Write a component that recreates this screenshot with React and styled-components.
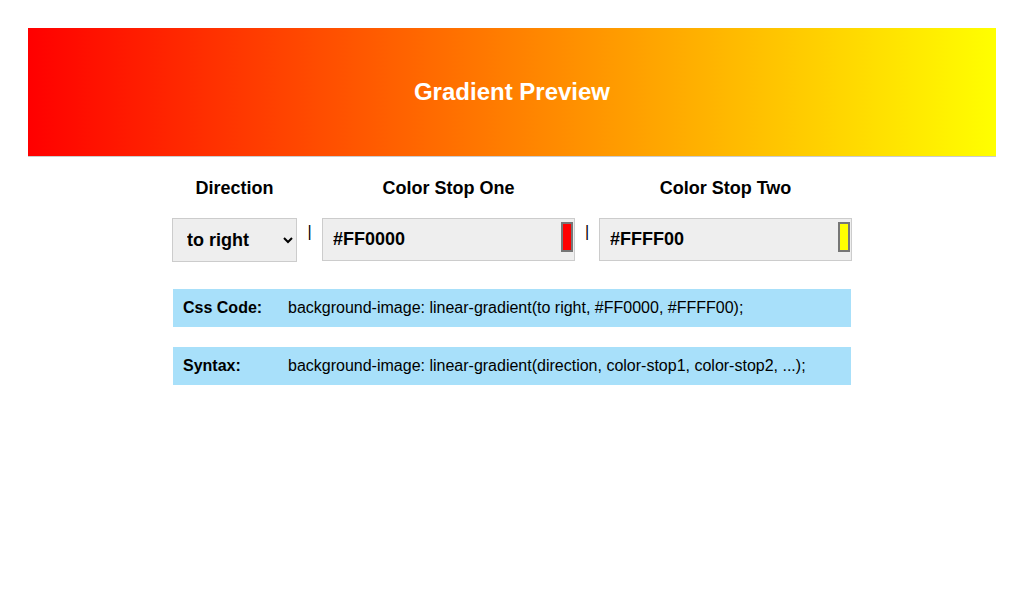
import React, { useState } from 'react';
import styled, { createGlobalStyle } from 'styled-components';

const GlobalStyle = createGlobalStyle`
    body {
        margin: 0;
        background: #ffffff;
        font-family: "Liberation Sans", Arial, sans-serif;
        color: #000000;
    }
`;

const App = () => {
    const [direction, setDirection] = useState('to right');
    const [stopOne, setStopOne] = useState('#FF0000');
    const [stopTwo, setStopTwo] = useState('#FFFF00');

    const gradient = `linear-gradient(${direction}, ${stopOne}, ${stopTwo})`;

    return (
        <>
            <GlobalStyle />
            <Page>
                <Preview style={{ backgroundImage: gradient }}>Gradient Preview</Preview>
                <Controls>
                    <Label>Direction</Label>
                    <span />
                    <Label>Color Stop One</Label>
                    <span />
                    <Label>Color Stop Two</Label>

                    <Select value={direction} onChange={(e) => setDirection(e.target.value)}>
                        <option value="to right">to right</option>
                        <option value="to left">to left</option>
                        <option value="to bottom">to bottom</option>
                        <option value="to top">to top</option>
                    </Select>
                    <Separator>|</Separator>
                    <ColorField>
                        <TextInput value={stopOne} onChange={(e) => setStopOne(e.target.value)} />
                        <Swatch $color={stopOne} />
                    </ColorField>
                    <Separator>|</Separator>
                    <ColorField>
                        <TextInput value={stopTwo} onChange={(e) => setStopTwo(e.target.value)} />
                        <Swatch $color={stopTwo} />
                    </ColorField>
                </Controls>

                <InfoRow>
                    <InfoLabel>Css Code:</InfoLabel>
                    <InfoValue>background-image: {gradient};</InfoValue>
                </InfoRow>
                <InfoRow>
                    <InfoLabel>Syntax:</InfoLabel>
                    <InfoValue>background-image: linear-gradient(direction, color-stop1, color-stop2, ...);</InfoValue>
                </InfoRow>
            </Page>
        </>
    );
};

const Page = styled.div`
    padding: 28px;
    display: flex;
    flex-direction: column;
    align-items: center;
`;

const Preview = styled.div`
    width: 100%;
    height: 128px;
    border-bottom: 1px solid #cccccc;
    display: flex;
    align-items: center;
    justify-content: center;
    color: #ffffff;
    font-size: 24px;
    font-weight: bold;
`;

const Controls = styled.div`
    display: grid;
    grid-template-columns: 125px 25px 253px 24px 253px;
    row-gap: 19px;
    margin-top: 20px;
    margin-bottom: 27px;
`;

const Label = styled.div`
    text-align: center;
    font-size: 18px;
    font-weight: bold;
    line-height: 22px;
`;

const Select = styled.select`
    height: 44px;
    padding: 0 8px 0 10px;
    background: #eeeeee;
    border: 1px solid #cccccc;
    border-radius: 0;
    font-family: "Liberation Sans", Arial, sans-serif;
    font-size: 18px;
    font-weight: bold;
    color: #000000;
`;

const Separator = styled.div`
    text-align: center;
    font-size: 16px;
    line-height: 16px;
    padding-top: 6px;
    color: #000000;
`;

const ColorField = styled.div`
    position: relative;
    height: 43px;
`;

const TextInput = styled.input`
    box-sizing: border-box;
    width: 100%;
    height: 100%;
    padding: 0 10px;
    background: #eeeeee;
    border: 1px solid #cccccc;
    outline: none;
    font-family: "Liberation Sans", Arial, sans-serif;
    font-size: 18px;
    font-weight: bold;
    color: #000000;
`;

const Swatch = styled.span`
    position: absolute;
    top: 4px;
    right: 2px;
    box-sizing: border-box;
    width: 12px;
    height: 30px;
    background: ${(p) => p.$color};
    border: 2px solid #767676;
`;

const InfoRow = styled.div`
    box-sizing: border-box;
    width: 678px;
    height: 38px;
    margin-bottom: 20px;
    padding: 0 10px;
    display: flex;
    align-items: center;
    background: #a8e0fa;
    font-size: 16px;
`;

const InfoLabel = styled.div`
    width: 105px;
    font-weight: bold;
`;

const InfoValue = styled.div``;

export default App;
